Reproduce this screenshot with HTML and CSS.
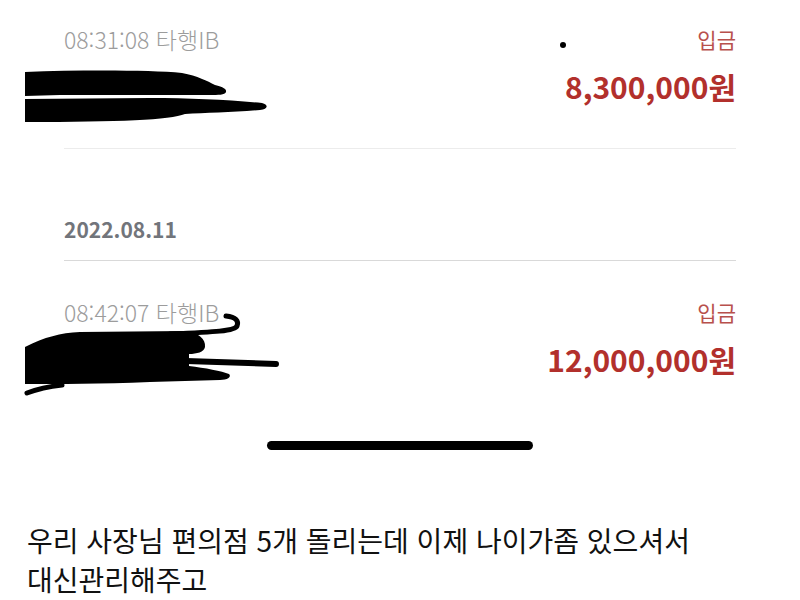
FILE: index.html
```html
<!DOCTYPE html>
<html lang="ko">

<head>
    <meta charset="UTF-8">
    <meta name="viewport" content="width=device-width, initial-scale=1.0">
    <title>입금내역</title>
    <link rel="stylesheet" href="styles.css">
</head>

<body>
    <div class="history">
        <div class="tx first">
            <div class="tx-left">
                <span class="tx-time">08:31:08 타행IB</span>
            </div>
            <div class="tx-right">
                <span class="tx-type">입금</span>
                <span class="tx-amount">8,300,000원</span>
            </div>
            <span class="dot"></span>
            <!-- redaction -->
            <svg class="scribble s1" width="255" height="60" viewBox="20 65 255 60">
                <path d="M25,72 C80,70 150,70 182,73 C198,76 207,81 215,85 C223,87 227,89 226,92 C225,95 218,95 210,95 L60,95 L25,96 Z" fill="#000"/>
                <path d="M25,99 L150,98 C190,98 230,100 262,103 C269,105 268,109 260,110 C235,112 205,113 185,114 C170,120 120,122 25,122 Z" fill="#000"/>
            </svg>
        </div>

        <div class="date-head">2022.08.11</div>

        <div class="tx second">
            <div class="tx-left">
                <span class="tx-time">08:42:07 타행IB</span>
            </div>
            <div class="tx-right">
                <span class="tx-type">입금</span>
                <span class="tx-amount">12,000,000원</span>
            </div>
            <svg class="scribble s2" width="265" height="90" viewBox="20 310 265 90">
                <path d="M25,347 C45,337 60,333 80,332 L185,331 C198,332 206,339 205,347 C204,352 197,354 189,354 L189,366 C205,368 222,371 229,374 C232,377 227,380 220,380 L150,382 C100,384 60,384 25,384 Z" fill="#000"/>
                <path d="M226,316 C236,317 239,321 237,326 C235,331 215,332 170,334" fill="none" stroke="#000" stroke-width="5" stroke-linecap="round"/>
                <path d="M186,361 L276,364" fill="none" stroke="#000" stroke-width="6" stroke-linecap="round"/>
                <path d="M62,385 C45,387 35,390 27,393" fill="none" stroke="#000" stroke-width="5" stroke-linecap="round"/>
            </svg>
        </div>
    </div>

    <div class="home-bar"></div>

    <p class="caption">우리 사장님 편의점 5개 돌리는데 이제 나이가좀 있으셔서<br>대신관리해주고</p>
</body>

</html>
```

FILE: styles.css
```css
body {
    font-family: "Noto Sans CJK KR", "Noto Sans", sans-serif;
    margin: 0;
    background-color: #fff;
    width: 800px;
    height: 600px;
    overflow: hidden;
}

.history {
    padding: 0 64px;
}

.tx {
    position: relative;
    display: flex;
    justify-content: space-between;
    align-items: flex-start;
}

.tx.first {
    padding-top: 24px;
    padding-bottom: 42px;
    border-bottom: 1px solid #ececec;
}

.tx.second {
    padding-top: 36px;
}

.tx-time {
    font-size: 23px;
    line-height: 30px;
    font-weight: 300;
    color: #9c9c9c;
}

.tx-right {
    display: flex;
    flex-direction: column;
    align-items: flex-end;
}

.tx-type {
    font-size: 21px;
    line-height: 30px;
    color: #b8504c;
}

.tx-amount {
    margin-top: 12px;
    font-size: 30px;
    line-height: 40px;
    font-weight: 700;
    color: #b2302c;
}

.dot {
    position: absolute;
    left: 496px;
    top: 42px;
    width: 6px;
    height: 6px;
    border-radius: 50%;
    background-color: #000;
}

.scribble {
    position: absolute;
}

.s1 {
    left: -44px;
    top: 65px;
}

.s2 {
    left: -44px;
    top: 49px;
}

.date-head {
    padding-top: 65px;
    padding-bottom: 16px;
    font-size: 21px;
    line-height: 30px;
    font-weight: 700;
    color: #72757b;
    border-bottom: 1px solid #d9d9d9;
}

.home-bar {
    width: 266px;
    height: 9px;
    margin: 62px auto 0;
    border-radius: 5px;
    background-color: #000;
}

.caption {
    margin: 71px 0 0;
    padding-left: 27px;
    font-size: 28px;
    line-height: 39px;
    color: #111;
}
```
